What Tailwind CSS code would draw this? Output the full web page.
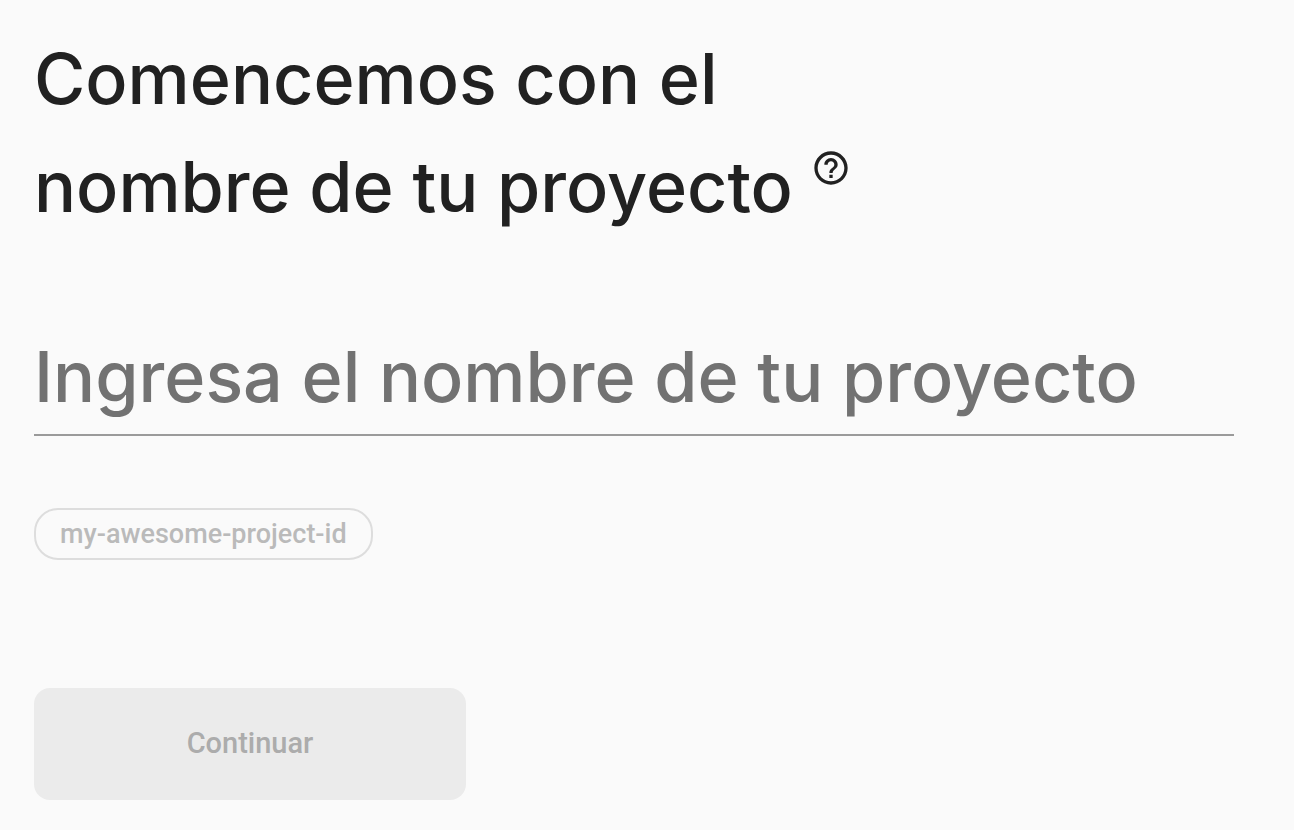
<!DOCTYPE html>
<html lang="es">
<head>
<meta charset="utf-8">
<meta name="viewport" content="width=device-width, initial-scale=1">
<title>Crear un proyecto</title>
<script src="https://cdn.jsdelivr.net/npm/@tailwindcss/browser@4"></script>
</head>
<body class="min-h-screen bg-[#fafafa] font-['Roboto',sans-serif]">
<main class="pt-[25px] pr-[60px] pb-[30px] pl-[34px]">
<form class="flex flex-col items-start">
<h1 class="font-['Inter',sans-serif] text-[70px] leading-[108px] font-medium text-[#212121]">
<label for="name">Comencemos con el<br>nombre de tu proyecto</label><button type="button" aria-label="Ayuda" class="ml-[18px] inline-block align-super"><svg class="size-10" viewBox="0 0 24 24" fill="currentColor" aria-hidden="true"><path d="M11 18h2v-2h-2v2zm1-16C6.480 2 2 6.480 2 12s4.480 10 10 10 10-4.480 10-10S17.520 2 12 2zm0 18c-4.410 0-8-3.590-8-8s3.590-8 8-8 8 3.590 8 8-3.590 8-8 8zm0-14c-2.210 0-4 1.790-4 4h2c0-1.100.9-2 2-2s2 .9 2 2c0 2-3 1.750-3 5h2c0-2.250 3-2.500 3-5 0-2.210-1.790-4-4-4z"/></svg></button>
</h1>
<input id="name" type="text" placeholder="Ingresa el nombre de tu proyecto" class="mt-[75px] h-[120px] w-full border-b-2 border-[#9a9a9a] bg-transparent pt-0.5 font-['Inter',sans-serif] text-[70px] font-medium outline-none placeholder:text-[#727272]">
<button type="button" disabled class="mt-[72px] h-[52px] rounded-3xl border-2 border-[#dddddd] px-6 text-[27px] font-medium text-[#bababa]">my-awesome-project-id</button>
<button type="submit" disabled class="mt-32 h-28 w-[432px] rounded-2xl bg-[#ebebeb] text-[29px] font-medium text-[#acacac]">Continuar</button>
</form>
</main>
</body>
</html>
